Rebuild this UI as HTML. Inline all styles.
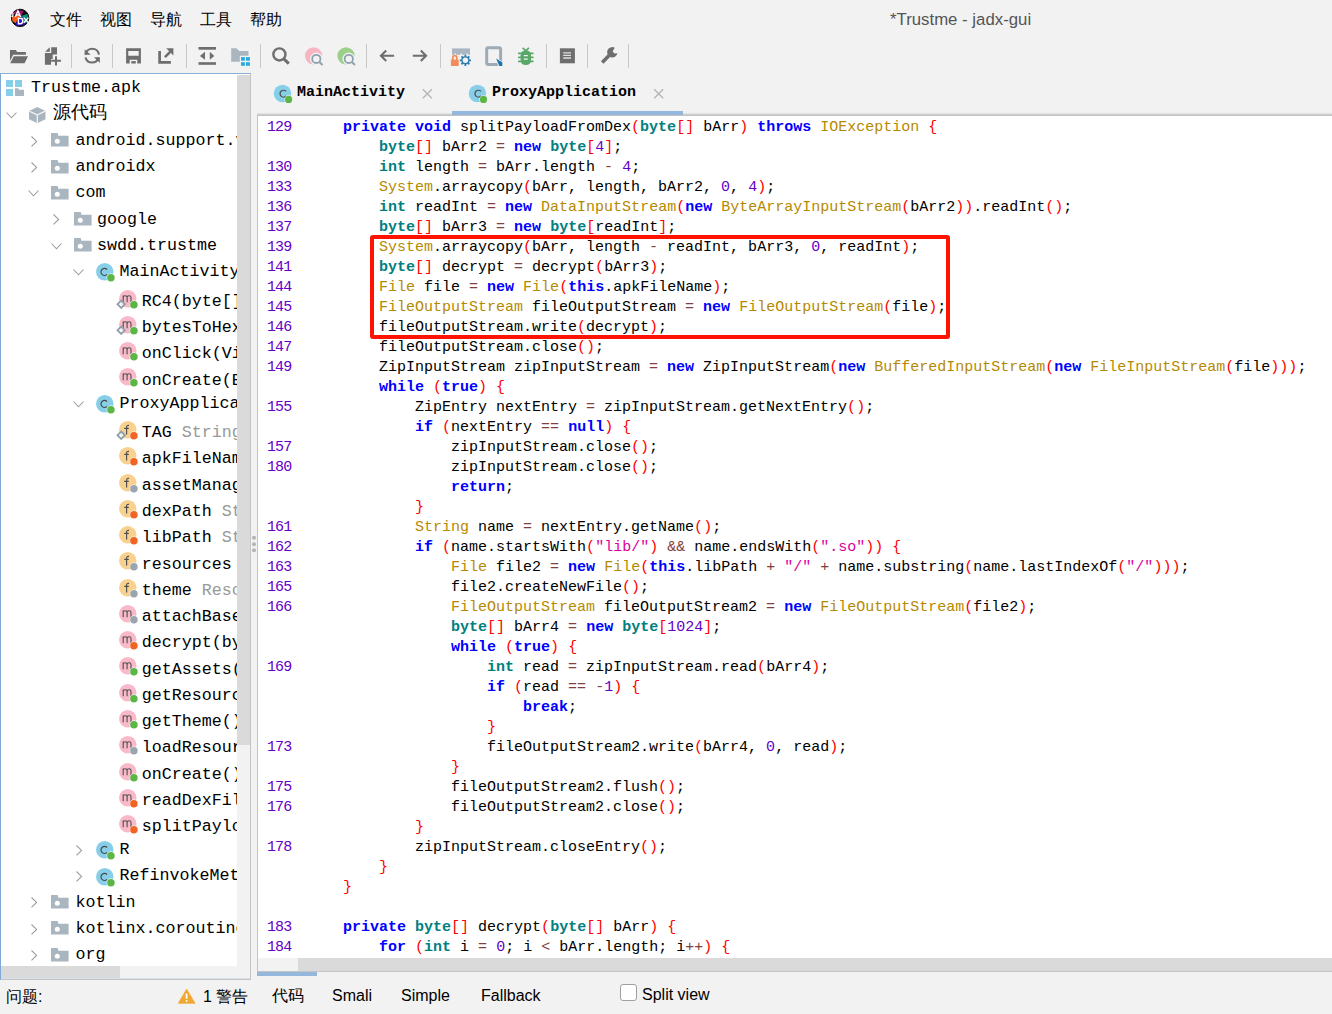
<!DOCTYPE html>
<html><head><meta charset="utf-8">
<style>
*{margin:0;padding:0;box-sizing:border-box}
html,body{width:1332px;height:1014px;overflow:hidden;background:#f2f2f2;font-family:"Liberation Sans",sans-serif;position:relative}
.abs{position:absolute}
.menu{position:absolute;top:10px;font-size:16px;line-height:20px;color:#000;white-space:nowrap}
.title{position:absolute;left:890px;top:10px;font-size:16.8px;line-height:20px;color:#555;white-space:nowrap}
.sep{position:absolute;top:44px;width:1px;height:24px;background:#c8c8c8}
/* tree */
#tree{position:absolute;left:0;top:73px;width:251px;height:907px;background:#fff;border-left:1px solid #80a8d6;border-top:1px solid #8aaed8;border-right:1px solid #c4c4c4;border-bottom:1px solid #c4c4c4;overflow:hidden}
.row{position:absolute;height:26px;left:0;white-space:nowrap;font-family:"Liberation Mono",monospace;font-size:16.67px;line-height:26px;color:#000}
.row .t{position:absolute;top:0}
.gr{color:#999}
#vs{position:absolute;left:236px;top:1px;width:13px;height:891px;background:#f2f2f2}
#vsth{position:absolute;left:236px;top:1px;width:13px;height:670px;background:#dadada}
#hs{position:absolute;left:0;top:892px;width:249px;height:12px;background:#f2f2f2}
#hsth{position:absolute;left:0;top:892px;width:119px;height:12px;background:#dadada}
#hsb{position:absolute;left:0;top:904px;width:249px;height:1px;background:#d6e1ec}
/* code */
#code{position:absolute;left:257px;top:116px;width:1080px;height:856px;background:#fff;border-left:1px solid #c4c4c4;overflow:hidden}
.ln{position:absolute;left:9px;letter-spacing:-0.9px;font-family:"Liberation Mono",monospace;font-size:15px;line-height:20px;color:#6400c8;white-space:pre}
.cl{position:absolute;left:49px;font-family:"Liberation Mono",monospace;font-size:15px;line-height:20px;color:#000;white-space:pre}
i,b{font-style:normal}
.k{color:#0000ff;font-weight:bold}
.d{color:#008080;font-weight:bold}
.c{color:#b58900}
.p{color:#ff0000}
.o{color:#804040}
.n{color:#6400c8}
.s{color:#dc009c}
.tab{position:absolute;top:83px;font-family:"Liberation Mono",monospace;font-weight:bold;font-size:15px;line-height:20px;color:#000;white-space:nowrap}
.status{position:absolute;top:985px;font-size:16px;line-height:20px;color:#000;white-space:nowrap}
</style></head><body>
<!-- menu bar -->
<div class="menu" style="left:50px">文件</div>
<div class="menu" style="left:100px">视图</div>
<div class="menu" style="left:150px">导航</div>
<div class="menu" style="left:200px">工具</div>
<div class="menu" style="left:250px">帮助</div>
<div class="title">*Trustme - jadx-gui</div>

<svg class="abs" style="left:0;top:0" width="640" height="72" viewBox="0 0 640 72">
<!-- logo -->
<defs><clipPath id="lc"><circle cx="20" cy="17.9" r="8.6"/></clipPath></defs>
<g clip-path="url(#lc)">
<rect x="10" y="8" width="20" height="20" fill="#0c0c0c"/>
<path d="M12 10.5L23.5 10.8L21.3 16L15.5 15.3Z" fill="#a8157a"/>
<path d="M10.5 16.5L20.5 15.4L15.6 23.2L10.8 20Z" fill="#f25c1e"/>
<path d="M21 16L29.5 13.2V21.8L24.6 23.5L22 18.5Z" fill="#0b8a78"/>
<path d="M17.5 19.5L22.5 17.2L25.3 24.6L15 26.6Z" fill="#3610c6"/>
</g>
<circle cx="20.1" cy="17.9" r="8.7" fill="none" stroke="#0c0c0c" stroke-width="1"/>
<path d="M12.9 12.4V15.2Q12.9 16.6 11.4 16.4" fill="none" stroke="#fff" stroke-width="1.3"/>
<path d="M15.3 17L17.9 10.8L20.6 17M16.3 15H19.6" fill="none" stroke="#fff" stroke-width="1.4"/>
<path d="M18.4 18.3H20.3Q22.8 18.3 22.8 21Q22.8 23.7 20.3 23.7H18.4Z" fill="none" stroke="#fff" stroke-width="1.4"/>
<path d="M23.8 17.6L28.4 22.8M28.4 17.6L23.8 22.8" fill="none" stroke="#fff" stroke-width="1.4"/>
<!-- open folder -->
<path d="M9.95 49.9H15.8L17.2 52.1H25.9V54.8H13.2L9.95 61Z" fill="#6e6e6e"/>
<path d="M13.8 56.2H28L24.6 63.2H10.2Z" fill="#6e6e6e"/>
<!-- file plus -->
<path d="M45.1 51.7L49.8 47.2V51.7Z" fill="#6e6e6e"/>
<path d="M51.2 47.2H57V54.6H52.7V59H51V64.7H44.9V53H51.2Z" fill="#6e6e6e"/>
<path d="M51.2 60.8H60.9M56 56.2V65.6" stroke="#6e6e6e" stroke-width="2"/>
<!-- refresh -->
<path d="M85.6 54.6A6.7 6.7 0 0 1 98.9 54.6" fill="none" stroke="#6e6e6e" stroke-width="2.1"/>
<path d="M84.7 49.2V54.8H90.6Z" fill="#6e6e6e"/>
<path d="M85.5 57.4A6.7 6.7 0 0 0 98.5 57.4" fill="none" stroke="#6e6e6e" stroke-width="2.1"/>
<path d="M99.8 57.3V62.9L94 57.3Z" fill="#6e6e6e"/>
<!-- save -->
<path d="M126.1 48.3H140.9V63.6H137.3V59.8H129.7V63.6H126.1Z M128.3 51V55.7H138.7V51Z" fill="#6e6e6e" fill-rule="evenodd"/>
<rect x="131.3" y="61.1" width="4.5" height="2.4" fill="#6e6e6e"/>
<!-- export -->
<path d="M159.6 51V62.3H170.9" fill="none" stroke="#6e6e6e" stroke-width="2.7"/>
<path d="M166.2 48.3H173.4V55.5Z" fill="#6e6e6e"/>
<path d="M164.9 57.2L170.2 51.9" stroke="#6e6e6e" stroke-width="2.6"/>
<!-- deobf -->
<rect x="198.5" y="47" width="17.5" height="2.7" fill="#6e6e6e"/>
<rect x="198.5" y="62.2" width="17.5" height="2.6" fill="#6e6e6e"/>
<path d="M199.9 55.9L205 51.8V59.8Z M209.8 51.8L214.3 55.9L209.8 59.8Z" fill="#6e6e6e"/>
<!-- folder grid -->
<path d="M231.2 48.2H236.4L239.3 51.1H248.5V55.7H239.8V61.7H231.2Z" fill="#a9b5bf"/>
<g fill="#2aa9e0"><rect x="241" y="57.1" width="3.9" height="3.6"/><rect x="246" y="57.1" width="3.9" height="3.6"/><rect x="241" y="62.2" width="3.9" height="3.6"/><rect x="246" y="62.2" width="3.9" height="3.6"/></g>
<!-- search -->
<circle cx="279.4" cy="54.4" r="6.05" fill="none" stroke="#6e6e6e" stroke-width="2.4"/>
<path d="M283.6 58.7L288.8 63.6" stroke="#6e6e6e" stroke-width="3"/>
<!-- pink search -->
<circle cx="313.6" cy="55.8" r="8.6" fill="#f7b5c4"/>
<circle cx="316.3" cy="58.9" r="6.3" fill="#f2f2f2"/>
<path d="M319.3 62L322.6 65" stroke="#f2f2f2" stroke-width="4"/>
<circle cx="316.3" cy="58.9" r="4.1" fill="none" stroke="#8fa2af" stroke-width="1.8"/>
<path d="M319.3 62L322.6 65" stroke="#8fa2af" stroke-width="2"/>
<!-- green search -->
<circle cx="346" cy="55.8" r="8.6" fill="#9ccf88"/>
<circle cx="348.8" cy="58.9" r="6.3" fill="#f2f2f2"/>
<path d="M351.8 62L355 65" stroke="#f2f2f2" stroke-width="4"/>
<circle cx="348.8" cy="58.9" r="4.1" fill="none" stroke="#8fa2af" stroke-width="1.8"/>
<path d="M351.8 62L355 65" stroke="#8fa2af" stroke-width="2"/>
<!-- back/forward -->
<path d="M381.2 55.7H394.1M386.2 50.4L380.9 55.7L386.2 61" fill="none" stroke="#6e6e6e" stroke-width="2.1"/>
<path d="M412.8 55.7H426M420.8 50.4L426.1 55.7L420.8 61" fill="none" stroke="#6e6e6e" stroke-width="2.1"/>
<!-- lock gear -->
<path d="M452 48.4H470V52.2H452Z" fill="#a9b5bf"/>
<path d="M452 52H470V54.7H468V53.5H466.5V54.7H462V53.5H460.5V54.7H456V53.5H454.5V54.7H452Z" fill="#a9b5bf"/>
<path d="M452.8 60V57.6A2 2 0 0 1 456.8 57.6V60" fill="none" stroke="#f28c5a" stroke-width="1.8"/>
<rect x="450.9" y="59.6" width="7.8" height="6.4" fill="#f28c5a"/>
<g transform="translate(465.4 60.3)" fill="#2e7fae">
<circle r="4.1"/>
<path d="M-0.9 -5.6H0.9V5.6H-0.9Z M-5.6 -0.9V0.9H5.6V-0.9Z"/>
<path d="M-0.9 -5.6H0.9V5.6H-0.9Z M-5.6 -0.9V0.9H5.6V-0.9Z" transform="rotate(45)"/>
</g>
<circle cx="465.4" cy="60.3" r="2.7" fill="#f2f2f2"/>
<!-- square pointer -->
<rect x="486.7" y="47.7" width="13.9" height="16.8" rx="1.5" fill="none" stroke="#9eabb6" stroke-width="3"/>
<path d="M495.2 57.2L503.5 62V67H498.6Z" fill="#f2f2f2"/>
<path d="M496.1 58.4L502.3 62.3V66.1H499.3Z" fill="#2176a8"/>
<!-- bug -->
<g fill="#59a869" stroke="#59a869">
<path d="M520.6 55.5Q520.6 50.6 525.8 50.6Q531 50.6 531 55.5V59.5Q531 65 525.8 65Q520.6 65 520.6 59.5Z" stroke="none"/>
<path d="M518.8 53.4H532.8M518.8 57.4H532.8M518.8 61.4H532.8" stroke-width="1.8" stroke-linecap="round" fill="none"/>
<path d="M522.6 47.8L525.8 50.6L529 47.8" stroke-width="1.6" fill="none"/>
</g>
<path d="M523.8 55.6H527.8M523.8 59.2H527.8" stroke="#f2f2f2" stroke-width="1.3"/>
<!-- list -->
<rect x="559.9" y="48.3" width="15" height="15" fill="#6e6e6e"/>
<path d="M563.2 52.8H571M563.2 55.4H571M563.2 58H571" stroke="#e0e0e0" stroke-width="1.3"/>
<!-- wrench -->
<path d="M602.2 62.4L609.8 54.8" stroke="#6e6e6e" stroke-width="3.6"/>
<path d="M614.8 47.8A5.2 5.2 0 1 0 617.4 53.2L614.5 53.5L612.6 51.3Z" fill="#6e6e6e"/>
</svg>

<!-- toolbar separators -->
<div class="sep" style="left:71px"></div>
<div class="sep" style="left:112px"></div>
<div class="sep" style="left:186px"></div>
<div class="sep" style="left:260px"></div>
<div class="sep" style="left:366px"></div>
<div class="sep" style="left:440px"></div>
<div class="sep" style="left:546px"></div>
<div class="sep" style="left:587px"></div>
<div class="sep" style="left:628px"></div>

<!-- tree -->
<div id="tree">
<div class="row" style="top:1.30px;width:236px"><div class="abs" style="left:-1.00px;top:5.60px"><svg width="20" height="18" style="position:absolute;left:6px;top:-1px"><rect x="0" y="0" width="7" height="7" fill="#87cfe9"/><rect x="9" y="0" width="7" height="7" fill="#87cfe9"/><rect x="0" y="9" width="7" height="7" fill="#87cfe9"/><path d="M9 8.3H12.3L13 9.8H18V16H9Z" fill="#a9b5bf"/></svg></div><div class="t" style="left:30.00px;top:0.00px">Trustme.apk</div></div>
<div class="row" style="top:27.57px;width:236px"><div class="abs" style="left:4.70px;top:10.00px"><svg width="12" height="8" style="position:absolute;left:0;top:0"><path d="M0.5 0.5L5.5 5.8L10.5 0.5" fill="none" stroke="#9a9a9a" stroke-width="1.05"/></svg></div><div class="abs" style="left:27.90px;top:5.10px"><svg width="18" height="18" style="position:absolute;left:0;top:0"><path d="M8.25 0L16.5 4V12.2L8.25 16.2L0 12.2V4Z" fill="#a9b5bf"/><path d="M0.5 4.2L8.25 8L16 4.2M8.25 8V16.2" fill="none" stroke="#fff" stroke-width="1.1"/></svg></div><div class="t" style="left:52.00px;top:0.00px"><span style="font-size:18px;font-weight:300;position:relative;top:-1.5px">源代码</span></div></div>
<div class="row" style="top:53.84px;width:236px"><div class="abs" style="left:29.80px;top:7.70px"><svg width="8" height="12" style="position:absolute;left:0;top:0"><path d="M0.5 0.5L5.6 5.4L0.5 10.3" fill="none" stroke="#9a9a9a" stroke-width="1.05"/></svg></div><div class="abs" style="left:50.00px;top:5.46px"><svg width="18" height="14" style="position:absolute;left:0;top:0"><path d="M0 0H6.7L7.4 2.7H17.6V13.5H0Z" fill="#a9b5bf"/><circle cx="6.3" cy="8.3" r="2.5" fill="#fff"/></svg></div><div class="t" style="left:74.50px;top:0.00px">android.support.v</div></div>
<div class="row" style="top:80.11px;width:236px"><div class="abs" style="left:29.80px;top:7.70px"><svg width="8" height="12" style="position:absolute;left:0;top:0"><path d="M0.5 0.5L5.6 5.4L0.5 10.3" fill="none" stroke="#9a9a9a" stroke-width="1.05"/></svg></div><div class="abs" style="left:50.00px;top:5.46px"><svg width="18" height="14" style="position:absolute;left:0;top:0"><path d="M0 0H6.7L7.4 2.7H17.6V13.5H0Z" fill="#a9b5bf"/><circle cx="6.3" cy="8.3" r="2.5" fill="#fff"/></svg></div><div class="t" style="left:74.50px;top:0.00px">androidx</div></div>
<div class="row" style="top:106.38px;width:236px"><div class="abs" style="left:27.20px;top:10.00px"><svg width="12" height="8" style="position:absolute;left:0;top:0"><path d="M0.5 0.5L5.5 5.8L10.5 0.5" fill="none" stroke="#9a9a9a" stroke-width="1.05"/></svg></div><div class="abs" style="left:50.00px;top:5.46px"><svg width="18" height="14" style="position:absolute;left:0;top:0"><path d="M0 0H6.7L7.4 2.7H17.6V13.5H0Z" fill="#a9b5bf"/><circle cx="6.3" cy="8.3" r="2.5" fill="#fff"/></svg></div><div class="t" style="left:74.50px;top:0.00px">com</div></div>
<div class="row" style="top:132.65px;width:236px"><div class="abs" style="left:52.30px;top:7.70px"><svg width="8" height="12" style="position:absolute;left:0;top:0"><path d="M0.5 0.5L5.6 5.4L0.5 10.3" fill="none" stroke="#9a9a9a" stroke-width="1.05"/></svg></div><div class="abs" style="left:72.50px;top:5.46px"><svg width="18" height="14" style="position:absolute;left:0;top:0"><path d="M0 0H6.7L7.4 2.7H17.6V13.5H0Z" fill="#a9b5bf"/><circle cx="6.3" cy="8.3" r="2.5" fill="#fff"/></svg></div><div class="t" style="left:96.00px;top:0.00px">google</div></div>
<div class="row" style="top:158.92px;width:236px"><div class="abs" style="left:49.70px;top:10.00px"><svg width="12" height="8" style="position:absolute;left:0;top:0"><path d="M0.5 0.5L5.5 5.8L10.5 0.5" fill="none" stroke="#9a9a9a" stroke-width="1.05"/></svg></div><div class="abs" style="left:72.50px;top:5.46px"><svg width="18" height="14" style="position:absolute;left:0;top:0"><path d="M0 0H6.7L7.4 2.7H17.6V13.5H0Z" fill="#a9b5bf"/><circle cx="6.3" cy="8.3" r="2.5" fill="#fff"/></svg></div><div class="t" style="left:96.00px;top:0.00px">swdd.trustme</div></div>
<div class="row" style="top:185.19px;width:236px"><div class="abs" style="left:72.20px;top:10.00px"><svg width="12" height="8" style="position:absolute;left:0;top:0"><path d="M0.5 0.5L5.5 5.8L10.5 0.5" fill="none" stroke="#9a9a9a" stroke-width="1.05"/></svg></div><div class="abs" style="left:95.00px;top:4.20px"><svg width="22" height="20" style="position:absolute;left:-1px;top:0;overflow:visible"><circle cx="9.75" cy="8.75" r="8.75" fill="#87cfe9"/><path d="M12.1 6.5A3.6 3.4 0 1 0 12.1 11.3" fill="none" stroke="#4a4a4a" stroke-width="1.15"/><circle cx="15.9" cy="14.8" r="4.3" fill="#fff"/><circle cx="15.9" cy="14.8" r="3.75" fill="#5cb645"/></svg></div><div class="t" style="left:118.50px;top:0.00px">MainActivity</div></div>
<div class="row" style="top:211.46px;width:236px"><div class="abs" style="left:117.50px;top:4.20px"><svg width="22" height="20" style="position:absolute;left:-1px;top:0;overflow:visible"><circle cx="9.75" cy="8.75" r="8.75" fill="#f9b9c9"/><path d="M5.2 12.2V5.6M5.2 7.6Q5.2 5.8 7 5.8Q9.1 5.8 9.1 7.6V12.2M9.1 7.6Q9.1 5.8 11 5.8Q13 5.8 13 7.6V12.2" fill="none" stroke="#4f4f4f" stroke-width="1.1"/><path d="M3.2 10.5L6.9 14.2L3.2 17.9L-0.5 14.2Z" fill="#fff" fill-opacity="0.6" stroke="#8fa0ac" stroke-width="1.8"/><circle cx="15.9" cy="14.8" r="4.3" fill="#fff"/><circle cx="15.9" cy="14.8" r="3.75" fill="#5cb645"/></svg></div><div class="t" style="left:140.70px;top:3.40px">RC4(byte[]</div></div>
<div class="row" style="top:237.73px;width:236px"><div class="abs" style="left:117.50px;top:4.20px"><svg width="22" height="20" style="position:absolute;left:-1px;top:0;overflow:visible"><circle cx="9.75" cy="8.75" r="8.75" fill="#f9b9c9"/><path d="M5.2 12.2V5.6M5.2 7.6Q5.2 5.8 7 5.8Q9.1 5.8 9.1 7.6V12.2M9.1 7.6Q9.1 5.8 11 5.8Q13 5.8 13 7.6V12.2" fill="none" stroke="#4f4f4f" stroke-width="1.1"/><path d="M3.2 10.5L6.9 14.2L3.2 17.9L-0.5 14.2Z" fill="#fff" fill-opacity="0.6" stroke="#8fa0ac" stroke-width="1.8"/><circle cx="15.9" cy="14.8" r="4.3" fill="#fff"/><circle cx="15.9" cy="14.8" r="3.75" fill="#5cb645"/></svg></div><div class="t" style="left:140.70px;top:3.40px">bytesToHex</div></div>
<div class="row" style="top:264.00px;width:236px"><div class="abs" style="left:117.50px;top:4.20px"><svg width="22" height="20" style="position:absolute;left:-1px;top:0;overflow:visible"><circle cx="9.75" cy="8.75" r="8.75" fill="#f9b9c9"/><path d="M5.2 12.2V5.6M5.2 7.6Q5.2 5.8 7 5.8Q9.1 5.8 9.1 7.6V12.2M9.1 7.6Q9.1 5.8 11 5.8Q13 5.8 13 7.6V12.2" fill="none" stroke="#4f4f4f" stroke-width="1.1"/><circle cx="15.9" cy="14.8" r="4.3" fill="#fff"/><circle cx="15.9" cy="14.8" r="3.75" fill="#5cb645"/></svg></div><div class="t" style="left:140.70px;top:3.40px">onClick(Vi</div></div>
<div class="row" style="top:290.27px;width:236px"><div class="abs" style="left:117.50px;top:4.20px"><svg width="22" height="20" style="position:absolute;left:-1px;top:0;overflow:visible"><circle cx="9.75" cy="8.75" r="8.75" fill="#f9b9c9"/><path d="M5.2 12.2V5.6M5.2 7.6Q5.2 5.8 7 5.8Q9.1 5.8 9.1 7.6V12.2M9.1 7.6Q9.1 5.8 11 5.8Q13 5.8 13 7.6V12.2" fill="none" stroke="#4f4f4f" stroke-width="1.1"/><circle cx="15.9" cy="14.8" r="4.3" fill="#fff"/><circle cx="15.9" cy="14.8" r="3.75" fill="#5cb645"/></svg></div><div class="t" style="left:140.70px;top:3.40px">onCreate(B</div></div>
<div class="row" style="top:316.54px;width:236px"><div class="abs" style="left:72.20px;top:10.00px"><svg width="12" height="8" style="position:absolute;left:0;top:0"><path d="M0.5 0.5L5.5 5.8L10.5 0.5" fill="none" stroke="#9a9a9a" stroke-width="1.05"/></svg></div><div class="abs" style="left:95.00px;top:4.20px"><svg width="22" height="20" style="position:absolute;left:-1px;top:0;overflow:visible"><circle cx="9.75" cy="8.75" r="8.75" fill="#87cfe9"/><path d="M12.1 6.5A3.6 3.4 0 1 0 12.1 11.3" fill="none" stroke="#4a4a4a" stroke-width="1.15"/><circle cx="15.9" cy="14.8" r="4.3" fill="#fff"/><circle cx="15.9" cy="14.8" r="3.75" fill="#5cb645"/></svg></div><div class="t" style="left:118.50px;top:0.00px">ProxyApplica</div></div>
<div class="row" style="top:342.81px;width:236px"><div class="abs" style="left:117.50px;top:4.20px"><svg width="22" height="20" style="position:absolute;left:-1px;top:0;overflow:visible"><circle cx="9.75" cy="8.75" r="8.75" fill="#f8d18f"/><path d="M11 4.4Q8.6 3.9 8.6 6.2V13.6M6.2 7.3H10.8" fill="none" stroke="#4f4f4f" stroke-width="1.15"/><path d="M3.2 10.5L6.9 14.2L3.2 17.9L-0.5 14.2Z" fill="#fff" fill-opacity="0.6" stroke="#8fa0ac" stroke-width="1.8"/><circle cx="15.9" cy="14.8" r="4.3" fill="#fff"/><circle cx="15.9" cy="14.8" r="3.75" fill="#f06424"/></svg></div><div class="t" style="left:140.70px;top:3.40px">TAG <span class="gr">String</span></div></div>
<div class="row" style="top:369.08px;width:236px"><div class="abs" style="left:117.50px;top:4.20px"><svg width="22" height="20" style="position:absolute;left:-1px;top:0;overflow:visible"><circle cx="9.75" cy="8.75" r="8.75" fill="#f8d18f"/><path d="M11 4.4Q8.6 3.9 8.6 6.2V13.6M6.2 7.3H10.8" fill="none" stroke="#4f4f4f" stroke-width="1.15"/><circle cx="15.9" cy="14.8" r="4.3" fill="#fff"/><circle cx="15.9" cy="14.8" r="3.75" fill="#f06424"/></svg></div><div class="t" style="left:140.70px;top:3.40px">apkFileNam</div></div>
<div class="row" style="top:395.35px;width:236px"><div class="abs" style="left:117.50px;top:4.20px"><svg width="22" height="20" style="position:absolute;left:-1px;top:0;overflow:visible"><circle cx="9.75" cy="8.75" r="8.75" fill="#f8d18f"/><path d="M11 4.4Q8.6 3.9 8.6 6.2V13.6M6.2 7.3H10.8" fill="none" stroke="#4f4f4f" stroke-width="1.15"/><circle cx="15.9" cy="14.8" r="4.3" fill="#fff"/><circle cx="15.9" cy="14.8" r="3.75" fill="#9aa5ad"/></svg></div><div class="t" style="left:140.70px;top:3.40px">assetManag</div></div>
<div class="row" style="top:421.62px;width:236px"><div class="abs" style="left:117.50px;top:4.20px"><svg width="22" height="20" style="position:absolute;left:-1px;top:0;overflow:visible"><circle cx="9.75" cy="8.75" r="8.75" fill="#f8d18f"/><path d="M11 4.4Q8.6 3.9 8.6 6.2V13.6M6.2 7.3H10.8" fill="none" stroke="#4f4f4f" stroke-width="1.15"/><circle cx="15.9" cy="14.8" r="4.3" fill="#fff"/><circle cx="15.9" cy="14.8" r="3.75" fill="#f06424"/></svg></div><div class="t" style="left:140.70px;top:3.40px">dexPath <span class="gr">St</span></div></div>
<div class="row" style="top:447.89px;width:236px"><div class="abs" style="left:117.50px;top:4.20px"><svg width="22" height="20" style="position:absolute;left:-1px;top:0;overflow:visible"><circle cx="9.75" cy="8.75" r="8.75" fill="#f8d18f"/><path d="M11 4.4Q8.6 3.9 8.6 6.2V13.6M6.2 7.3H10.8" fill="none" stroke="#4f4f4f" stroke-width="1.15"/><circle cx="15.9" cy="14.8" r="4.3" fill="#fff"/><circle cx="15.9" cy="14.8" r="3.75" fill="#f06424"/></svg></div><div class="t" style="left:140.70px;top:3.40px">libPath <span class="gr">St</span></div></div>
<div class="row" style="top:474.16px;width:236px"><div class="abs" style="left:117.50px;top:4.20px"><svg width="22" height="20" style="position:absolute;left:-1px;top:0;overflow:visible"><circle cx="9.75" cy="8.75" r="8.75" fill="#f8d18f"/><path d="M11 4.4Q8.6 3.9 8.6 6.2V13.6M6.2 7.3H10.8" fill="none" stroke="#4f4f4f" stroke-width="1.15"/><circle cx="15.9" cy="14.8" r="4.3" fill="#fff"/><circle cx="15.9" cy="14.8" r="3.75" fill="#9aa5ad"/></svg></div><div class="t" style="left:140.70px;top:3.40px">resources </div></div>
<div class="row" style="top:500.43px;width:236px"><div class="abs" style="left:117.50px;top:4.20px"><svg width="22" height="20" style="position:absolute;left:-1px;top:0;overflow:visible"><circle cx="9.75" cy="8.75" r="8.75" fill="#f8d18f"/><path d="M11 4.4Q8.6 3.9 8.6 6.2V13.6M6.2 7.3H10.8" fill="none" stroke="#4f4f4f" stroke-width="1.15"/><circle cx="15.9" cy="14.8" r="4.3" fill="#fff"/><circle cx="15.9" cy="14.8" r="3.75" fill="#9aa5ad"/></svg></div><div class="t" style="left:140.70px;top:3.40px">theme <span class="gr">Reso</span></div></div>
<div class="row" style="top:526.70px;width:236px"><div class="abs" style="left:117.50px;top:4.20px"><svg width="22" height="20" style="position:absolute;left:-1px;top:0;overflow:visible"><circle cx="9.75" cy="8.75" r="8.75" fill="#f9b9c9"/><path d="M5.2 12.2V5.6M5.2 7.6Q5.2 5.8 7 5.8Q9.1 5.8 9.1 7.6V12.2M9.1 7.6Q9.1 5.8 11 5.8Q13 5.8 13 7.6V12.2" fill="none" stroke="#4f4f4f" stroke-width="1.1"/><circle cx="15.9" cy="14.8" r="4.3" fill="#fff"/><circle cx="15.9" cy="14.8" r="3.75" fill="#9aa5ad"/></svg></div><div class="t" style="left:140.70px;top:3.40px">attachBase</div></div>
<div class="row" style="top:552.97px;width:236px"><div class="abs" style="left:117.50px;top:4.20px"><svg width="22" height="20" style="position:absolute;left:-1px;top:0;overflow:visible"><circle cx="9.75" cy="8.75" r="8.75" fill="#f9b9c9"/><path d="M5.2 12.2V5.6M5.2 7.6Q5.2 5.8 7 5.8Q9.1 5.8 9.1 7.6V12.2M9.1 7.6Q9.1 5.8 11 5.8Q13 5.8 13 7.6V12.2" fill="none" stroke="#4f4f4f" stroke-width="1.1"/><circle cx="15.9" cy="14.8" r="4.3" fill="#fff"/><circle cx="15.9" cy="14.8" r="3.75" fill="#f06424"/></svg></div><div class="t" style="left:140.70px;top:3.40px">decrypt(by</div></div>
<div class="row" style="top:579.24px;width:236px"><div class="abs" style="left:117.50px;top:4.20px"><svg width="22" height="20" style="position:absolute;left:-1px;top:0;overflow:visible"><circle cx="9.75" cy="8.75" r="8.75" fill="#f9b9c9"/><path d="M5.2 12.2V5.6M5.2 7.6Q5.2 5.8 7 5.8Q9.1 5.8 9.1 7.6V12.2M9.1 7.6Q9.1 5.8 11 5.8Q13 5.8 13 7.6V12.2" fill="none" stroke="#4f4f4f" stroke-width="1.1"/><circle cx="15.9" cy="14.8" r="4.3" fill="#fff"/><circle cx="15.9" cy="14.8" r="3.75" fill="#5cb645"/></svg></div><div class="t" style="left:140.70px;top:3.40px">getAssets(</div></div>
<div class="row" style="top:605.51px;width:236px"><div class="abs" style="left:117.50px;top:4.20px"><svg width="22" height="20" style="position:absolute;left:-1px;top:0;overflow:visible"><circle cx="9.75" cy="8.75" r="8.75" fill="#f9b9c9"/><path d="M5.2 12.2V5.6M5.2 7.6Q5.2 5.8 7 5.8Q9.1 5.8 9.1 7.6V12.2M9.1 7.6Q9.1 5.8 11 5.8Q13 5.8 13 7.6V12.2" fill="none" stroke="#4f4f4f" stroke-width="1.1"/><circle cx="15.9" cy="14.8" r="4.3" fill="#fff"/><circle cx="15.9" cy="14.8" r="3.75" fill="#5cb645"/></svg></div><div class="t" style="left:140.70px;top:3.40px">getResourc</div></div>
<div class="row" style="top:631.78px;width:236px"><div class="abs" style="left:117.50px;top:4.20px"><svg width="22" height="20" style="position:absolute;left:-1px;top:0;overflow:visible"><circle cx="9.75" cy="8.75" r="8.75" fill="#f9b9c9"/><path d="M5.2 12.2V5.6M5.2 7.6Q5.2 5.8 7 5.8Q9.1 5.8 9.1 7.6V12.2M9.1 7.6Q9.1 5.8 11 5.8Q13 5.8 13 7.6V12.2" fill="none" stroke="#4f4f4f" stroke-width="1.1"/><circle cx="15.9" cy="14.8" r="4.3" fill="#fff"/><circle cx="15.9" cy="14.8" r="3.75" fill="#5cb645"/></svg></div><div class="t" style="left:140.70px;top:3.40px">getTheme()</div></div>
<div class="row" style="top:658.05px;width:236px"><div class="abs" style="left:117.50px;top:4.20px"><svg width="22" height="20" style="position:absolute;left:-1px;top:0;overflow:visible"><circle cx="9.75" cy="8.75" r="8.75" fill="#f9b9c9"/><path d="M5.2 12.2V5.6M5.2 7.6Q5.2 5.8 7 5.8Q9.1 5.8 9.1 7.6V12.2M9.1 7.6Q9.1 5.8 11 5.8Q13 5.8 13 7.6V12.2" fill="none" stroke="#4f4f4f" stroke-width="1.1"/><circle cx="15.9" cy="14.8" r="4.3" fill="#fff"/><circle cx="15.9" cy="14.8" r="3.75" fill="#9aa5ad"/></svg></div><div class="t" style="left:140.70px;top:3.40px">loadResour</div></div>
<div class="row" style="top:684.32px;width:236px"><div class="abs" style="left:117.50px;top:4.20px"><svg width="22" height="20" style="position:absolute;left:-1px;top:0;overflow:visible"><circle cx="9.75" cy="8.75" r="8.75" fill="#f9b9c9"/><path d="M5.2 12.2V5.6M5.2 7.6Q5.2 5.8 7 5.8Q9.1 5.8 9.1 7.6V12.2M9.1 7.6Q9.1 5.8 11 5.8Q13 5.8 13 7.6V12.2" fill="none" stroke="#4f4f4f" stroke-width="1.1"/><circle cx="15.9" cy="14.8" r="4.3" fill="#fff"/><circle cx="15.9" cy="14.8" r="3.75" fill="#5cb645"/></svg></div><div class="t" style="left:140.70px;top:3.40px">onCreate()</div></div>
<div class="row" style="top:710.59px;width:236px"><div class="abs" style="left:117.50px;top:4.20px"><svg width="22" height="20" style="position:absolute;left:-1px;top:0;overflow:visible"><circle cx="9.75" cy="8.75" r="8.75" fill="#f9b9c9"/><path d="M5.2 12.2V5.6M5.2 7.6Q5.2 5.8 7 5.8Q9.1 5.8 9.1 7.6V12.2M9.1 7.6Q9.1 5.8 11 5.8Q13 5.8 13 7.6V12.2" fill="none" stroke="#4f4f4f" stroke-width="1.1"/><circle cx="15.9" cy="14.8" r="4.3" fill="#fff"/><circle cx="15.9" cy="14.8" r="3.75" fill="#f06424"/></svg></div><div class="t" style="left:140.70px;top:3.40px">readDexFil</div></div>
<div class="row" style="top:736.86px;width:236px"><div class="abs" style="left:117.50px;top:4.20px"><svg width="22" height="20" style="position:absolute;left:-1px;top:0;overflow:visible"><circle cx="9.75" cy="8.75" r="8.75" fill="#f9b9c9"/><path d="M5.2 12.2V5.6M5.2 7.6Q5.2 5.8 7 5.8Q9.1 5.8 9.1 7.6V12.2M9.1 7.6Q9.1 5.8 11 5.8Q13 5.8 13 7.6V12.2" fill="none" stroke="#4f4f4f" stroke-width="1.1"/><circle cx="15.9" cy="14.8" r="4.3" fill="#fff"/><circle cx="15.9" cy="14.8" r="3.75" fill="#f06424"/></svg></div><div class="t" style="left:140.70px;top:3.40px">splitPaylo</div></div>
<div class="row" style="top:763.13px;width:236px"><div class="abs" style="left:74.80px;top:7.70px"><svg width="8" height="12" style="position:absolute;left:0;top:0"><path d="M0.5 0.5L5.6 5.4L0.5 10.3" fill="none" stroke="#9a9a9a" stroke-width="1.05"/></svg></div><div class="abs" style="left:95.00px;top:4.20px"><svg width="22" height="20" style="position:absolute;left:-1px;top:0;overflow:visible"><circle cx="9.75" cy="8.75" r="8.75" fill="#87cfe9"/><path d="M12.1 6.5A3.6 3.4 0 1 0 12.1 11.3" fill="none" stroke="#4a4a4a" stroke-width="1.15"/><circle cx="15.9" cy="14.8" r="4.3" fill="#fff"/><circle cx="15.9" cy="14.8" r="3.75" fill="#5cb645"/></svg></div><div class="t" style="left:118.50px;top:0.00px">R</div></div>
<div class="row" style="top:789.40px;width:236px"><div class="abs" style="left:74.80px;top:7.70px"><svg width="8" height="12" style="position:absolute;left:0;top:0"><path d="M0.5 0.5L5.6 5.4L0.5 10.3" fill="none" stroke="#9a9a9a" stroke-width="1.05"/></svg></div><div class="abs" style="left:95.00px;top:4.20px"><svg width="22" height="20" style="position:absolute;left:-1px;top:0;overflow:visible"><circle cx="9.75" cy="8.75" r="8.75" fill="#87cfe9"/><path d="M12.1 6.5A3.6 3.4 0 1 0 12.1 11.3" fill="none" stroke="#4a4a4a" stroke-width="1.15"/><circle cx="15.9" cy="14.8" r="4.3" fill="#fff"/><circle cx="15.9" cy="14.8" r="3.75" fill="#5cb645"/></svg></div><div class="t" style="left:118.50px;top:0.00px">RefinvokeMet</div></div>
<div class="row" style="top:815.67px;width:236px"><div class="abs" style="left:29.80px;top:7.70px"><svg width="8" height="12" style="position:absolute;left:0;top:0"><path d="M0.5 0.5L5.6 5.4L0.5 10.3" fill="none" stroke="#9a9a9a" stroke-width="1.05"/></svg></div><div class="abs" style="left:50.00px;top:5.46px"><svg width="18" height="14" style="position:absolute;left:0;top:0"><path d="M0 0H6.7L7.4 2.7H17.6V13.5H0Z" fill="#a9b5bf"/><circle cx="6.3" cy="8.3" r="2.5" fill="#fff"/></svg></div><div class="t" style="left:74.50px;top:0.00px">kotlin</div></div>
<div class="row" style="top:841.94px;width:236px"><div class="abs" style="left:29.80px;top:7.70px"><svg width="8" height="12" style="position:absolute;left:0;top:0"><path d="M0.5 0.5L5.6 5.4L0.5 10.3" fill="none" stroke="#9a9a9a" stroke-width="1.05"/></svg></div><div class="abs" style="left:50.00px;top:5.46px"><svg width="18" height="14" style="position:absolute;left:0;top:0"><path d="M0 0H6.7L7.4 2.7H17.6V13.5H0Z" fill="#a9b5bf"/><circle cx="6.3" cy="8.3" r="2.5" fill="#fff"/></svg></div><div class="t" style="left:74.50px;top:0.00px">kotlinx.coroutine</div></div>
<div class="row" style="top:868.21px;width:236px"><div class="abs" style="left:29.80px;top:7.70px"><svg width="8" height="12" style="position:absolute;left:0;top:0"><path d="M0.5 0.5L5.6 5.4L0.5 10.3" fill="none" stroke="#9a9a9a" stroke-width="1.05"/></svg></div><div class="abs" style="left:50.00px;top:5.46px"><svg width="18" height="14" style="position:absolute;left:0;top:0"><path d="M0 0H6.7L7.4 2.7H17.6V13.5H0Z" fill="#a9b5bf"/><circle cx="6.3" cy="8.3" r="2.5" fill="#fff"/></svg></div><div class="t" style="left:74.50px;top:0.00px">org</div></div>
<div id="vs"></div><div id="vsth"></div><div id="hs"></div><div id="hsth"></div><div id="hsb"></div>
</div>

<!-- tabs -->
<div class="tab" style="left:297px">MainActivity</div>
<div class="tab" style="left:492px">ProxyApplication</div>

<!-- code -->
<div id="code">
<div class="ln" style="top:1.84px">129</div><div class="cl" style="top:1.84px">    <b class="k">private</b> <b class="k">void</b> splitPayloadFromDex<i class="p">(</i><b class="d">byte</b><i class="p">[</i><i class="p">]</i> bArr<i class="p">)</i> <b class="k">throws</b> <i class="c">IOException</i> <i class="p">{</i></div>
<div class="ln" style="top:21.84px"></div><div class="cl" style="top:21.84px">        <b class="d">byte</b><i class="p">[</i><i class="p">]</i> bArr2 <i class="o">=</i> <b class="k">new</b> <b class="d">byte</b><i class="p">[</i><i class="n">4</i><i class="p">]</i>;</div>
<div class="ln" style="top:41.84px">130</div><div class="cl" style="top:41.84px">        <b class="d">int</b> length <i class="o">=</i> bArr.length <i class="o">-</i> <i class="n">4</i>;</div>
<div class="ln" style="top:61.84px">133</div><div class="cl" style="top:61.84px">        <i class="c">System</i>.arraycopy<i class="p">(</i>bArr, length, bArr2, <i class="n">0</i>, <i class="n">4</i><i class="p">)</i>;</div>
<div class="ln" style="top:81.84px">136</div><div class="cl" style="top:81.84px">        <b class="d">int</b> readInt <i class="o">=</i> <b class="k">new</b> <i class="c">DataInputStream</i><i class="p">(</i><b class="k">new</b> <i class="c">ByteArrayInputStream</i><i class="p">(</i>bArr2<i class="p">)</i><i class="p">)</i>.readInt<i class="p">(</i><i class="p">)</i>;</div>
<div class="ln" style="top:101.84px">137</div><div class="cl" style="top:101.84px">        <b class="d">byte</b><i class="p">[</i><i class="p">]</i> bArr3 <i class="o">=</i> <b class="k">new</b> <b class="d">byte</b><i class="p">[</i>readInt<i class="p">]</i>;</div>
<div class="ln" style="top:121.84px">139</div><div class="cl" style="top:121.84px">        <i class="c">System</i>.arraycopy<i class="p">(</i>bArr, length <i class="o">-</i> readInt, bArr3, <i class="n">0</i>, readInt<i class="p">)</i>;</div>
<div class="ln" style="top:141.84px">141</div><div class="cl" style="top:141.84px">        <b class="d">byte</b><i class="p">[</i><i class="p">]</i> decrypt <i class="o">=</i> decrypt<i class="p">(</i>bArr3<i class="p">)</i>;</div>
<div class="ln" style="top:161.84px">144</div><div class="cl" style="top:161.84px">        <i class="c">File</i> file <i class="o">=</i> <b class="k">new</b> <i class="c">File</i><i class="p">(</i><b class="k">this</b>.apkFileName<i class="p">)</i>;</div>
<div class="ln" style="top:181.84px">145</div><div class="cl" style="top:181.84px">        <i class="c">FileOutputStream</i> fileOutputStream <i class="o">=</i> <b class="k">new</b> <i class="c">FileOutputStream</i><i class="p">(</i>file<i class="p">)</i>;</div>
<div class="ln" style="top:201.84px">146</div><div class="cl" style="top:201.84px">        fileOutputStream.write<i class="p">(</i>decrypt<i class="p">)</i>;</div>
<div class="ln" style="top:221.84px">147</div><div class="cl" style="top:221.84px">        fileOutputStream.close<i class="p">(</i><i class="p">)</i>;</div>
<div class="ln" style="top:241.84px">149</div><div class="cl" style="top:241.84px">        ZipInputStream zipInputStream <i class="o">=</i> <b class="k">new</b> ZipInputStream<i class="p">(</i><b class="k">new</b> <i class="c">BufferedInputStream</i><i class="p">(</i><b class="k">new</b> <i class="c">FileInputStream</i><i class="p">(</i>file<i class="p">)</i><i class="p">)</i><i class="p">)</i>;</div>
<div class="ln" style="top:261.84px"></div><div class="cl" style="top:261.84px">        <b class="k">while</b> <i class="p">(</i><b class="k">true</b><i class="p">)</i> <i class="p">{</i></div>
<div class="ln" style="top:281.84px">155</div><div class="cl" style="top:281.84px">            ZipEntry nextEntry <i class="o">=</i> zipInputStream.getNextEntry<i class="p">(</i><i class="p">)</i>;</div>
<div class="ln" style="top:301.84px"></div><div class="cl" style="top:301.84px">            <b class="k">if</b> <i class="p">(</i>nextEntry <i class="o">==</i> <b class="k">null</b><i class="p">)</i> <i class="p">{</i></div>
<div class="ln" style="top:321.84px">157</div><div class="cl" style="top:321.84px">                zipInputStream.close<i class="p">(</i><i class="p">)</i>;</div>
<div class="ln" style="top:341.84px">180</div><div class="cl" style="top:341.84px">                zipInputStream.close<i class="p">(</i><i class="p">)</i>;</div>
<div class="ln" style="top:361.84px"></div><div class="cl" style="top:361.84px">                <b class="k">return</b>;</div>
<div class="ln" style="top:381.84px"></div><div class="cl" style="top:381.84px">            <i class="p">}</i></div>
<div class="ln" style="top:401.84px">161</div><div class="cl" style="top:401.84px">            <i class="c">String</i> name <i class="o">=</i> nextEntry.getName<i class="p">(</i><i class="p">)</i>;</div>
<div class="ln" style="top:421.84px">162</div><div class="cl" style="top:421.84px">            <b class="k">if</b> <i class="p">(</i>name.startsWith<i class="p">(</i><i class="s">"lib/"</i><i class="p">)</i> <i class="o">&amp;&amp;</i> name.endsWith<i class="p">(</i><i class="s">".so"</i><i class="p">)</i><i class="p">)</i> <i class="p">{</i></div>
<div class="ln" style="top:441.84px">163</div><div class="cl" style="top:441.84px">                <i class="c">File</i> file2 <i class="o">=</i> <b class="k">new</b> <i class="c">File</i><i class="p">(</i><b class="k">this</b>.libPath <i class="o">+</i> <i class="s">"/"</i> <i class="o">+</i> name.substring<i class="p">(</i>name.lastIndexOf<i class="p">(</i><i class="s">"/"</i><i class="p">)</i><i class="p">)</i><i class="p">)</i>;</div>
<div class="ln" style="top:461.84px">165</div><div class="cl" style="top:461.84px">                file2.createNewFile<i class="p">(</i><i class="p">)</i>;</div>
<div class="ln" style="top:481.84px">166</div><div class="cl" style="top:481.84px">                <i class="c">FileOutputStream</i> fileOutputStream2 <i class="o">=</i> <b class="k">new</b> <i class="c">FileOutputStream</i><i class="p">(</i>file2<i class="p">)</i>;</div>
<div class="ln" style="top:501.84px"></div><div class="cl" style="top:501.84px">                <b class="d">byte</b><i class="p">[</i><i class="p">]</i> bArr4 <i class="o">=</i> <b class="k">new</b> <b class="d">byte</b><i class="p">[</i><i class="n">1024</i><i class="p">]</i>;</div>
<div class="ln" style="top:521.84px"></div><div class="cl" style="top:521.84px">                <b class="k">while</b> <i class="p">(</i><b class="k">true</b><i class="p">)</i> <i class="p">{</i></div>
<div class="ln" style="top:541.84px">169</div><div class="cl" style="top:541.84px">                    <b class="d">int</b> read <i class="o">=</i> zipInputStream.read<i class="p">(</i>bArr4<i class="p">)</i>;</div>
<div class="ln" style="top:561.84px"></div><div class="cl" style="top:561.84px">                    <b class="k">if</b> <i class="p">(</i>read <i class="o">==</i> <i class="o">-</i><i class="n">1</i><i class="p">)</i> <i class="p">{</i></div>
<div class="ln" style="top:581.84px"></div><div class="cl" style="top:581.84px">                        <b class="k">break</b>;</div>
<div class="ln" style="top:601.84px"></div><div class="cl" style="top:601.84px">                    <i class="p">}</i></div>
<div class="ln" style="top:621.84px">173</div><div class="cl" style="top:621.84px">                    fileOutputStream2.write<i class="p">(</i>bArr4, <i class="n">0</i>, read<i class="p">)</i>;</div>
<div class="ln" style="top:641.84px"></div><div class="cl" style="top:641.84px">                <i class="p">}</i></div>
<div class="ln" style="top:661.84px">175</div><div class="cl" style="top:661.84px">                fileOutputStream2.flush<i class="p">(</i><i class="p">)</i>;</div>
<div class="ln" style="top:681.84px">176</div><div class="cl" style="top:681.84px">                fileOutputStream2.close<i class="p">(</i><i class="p">)</i>;</div>
<div class="ln" style="top:701.84px"></div><div class="cl" style="top:701.84px">            <i class="p">}</i></div>
<div class="ln" style="top:721.84px">178</div><div class="cl" style="top:721.84px">            zipInputStream.closeEntry<i class="p">(</i><i class="p">)</i>;</div>
<div class="ln" style="top:741.84px"></div><div class="cl" style="top:741.84px">        <i class="p">}</i></div>
<div class="ln" style="top:761.84px"></div><div class="cl" style="top:761.84px">    <i class="p">}</i></div>
<div class="ln" style="top:781.84px"></div><div class="cl" style="top:781.84px"></div>
<div class="ln" style="top:801.84px">183</div><div class="cl" style="top:801.84px">    <b class="k">private</b> <b class="d">byte</b><i class="p">[</i><i class="p">]</i> decrypt<i class="p">(</i><b class="d">byte</b><i class="p">[</i><i class="p">]</i> bArr<i class="p">)</i> <i class="p">{</i></div>
<div class="ln" style="top:821.84px">184</div><div class="cl" style="top:821.84px">        <b class="k">for</b> <i class="p">(</i><b class="d">int</b> i <i class="o">=</i> <i class="n">0</i>; i <i class="o">&lt;</i> bArr.length; i<i class="o">++</i><i class="p">)</i> <i class="p">{</i></div>
</div>


<!-- tab icons -->
<svg class="abs" style="left:0;top:0" width="700" height="120">
<circle cx="282.5" cy="93.5" r="8.7" fill="#87cfe9"/>
<path d="M288.3 91.4A3.5 3.4 0 1 0 288.3 96" fill="none" stroke="#505050" stroke-width="1.3" transform="translate(-2.2 0)"/>
<circle cx="288.6" cy="99.4" r="4.2" fill="#f2f2f2"/><circle cx="288.6" cy="99.4" r="3.6" fill="#5cb645"/>
<path d="M422.8 89.2L431.8 98.2M431.8 89.2L422.8 98.2" stroke="#b4b4b4" stroke-width="1.3"/>
<circle cx="477.4" cy="93.5" r="8.7" fill="#87cfe9"/>
<path d="M483.2 91.4A3.5 3.4 0 1 0 483.2 96" fill="none" stroke="#505050" stroke-width="1.3" transform="translate(-2.2 0)"/>
<circle cx="483.5" cy="99.4" r="4.2" fill="#f2f2f2"/><circle cx="483.5" cy="99.4" r="3.6" fill="#5cb645"/>
<path d="M654.2 89.2L663.2 98.2M663.2 89.2L654.2 98.2" stroke="#b4b4b4" stroke-width="1.3"/>
</svg>
<!-- splitter dots -->
<svg class="abs" style="left:250px;top:533px" width="8" height="22">
<circle cx="4" cy="4.8" r="2" fill="#b4b4b4"/><circle cx="4" cy="11.2" r="2" fill="#b4b4b4"/><circle cx="4" cy="17.3" r="2" fill="#b4b4b4"/>
</svg>
<!-- warning -->
<svg class="abs" style="left:178px;top:988px" width="18" height="16">
<path d="M8.6 1.2L17 15.2H0.4Z" fill="#f0a830" stroke="#f0a830" stroke-width="0.8" stroke-linejoin="round"/>
<path d="M8.6 5.5V10.8" stroke="#fff" stroke-width="1.8"/><circle cx="8.6" cy="13" r="1" fill="#fff"/>
</svg>
<!-- code bottom: scrollbar + blue bar -->
<div class="abs" style="left:258px;top:958px;width:1074px;height:13px;background:#f2f2f2"></div>
<div class="abs" style="left:298px;top:958px;width:1034px;height:13px;background:#dadada"></div>
<div class="abs" style="left:257px;top:971px;width:1075px;height:1px;background:#c4c4c4"></div>
<div class="abs" style="left:257px;top:972px;width:60px;height:4px;background:#94b8dc"></div>

<div class="abs" style="left:370px;top:235px;width:580px;height:104px;border:4px solid #ff1200;border-radius:3px"></div>
<div class="abs" style="left:257px;top:113px;width:1075px;height:1px;background:#e2e2e2"></div><div class="abs" style="left:257px;top:114px;width:1075px;height:1px;background:#d0d0d0"></div><div class="abs" style="left:257px;top:115px;width:1075px;height:1px;background:#c2c2c2"></div>
<div class="abs" style="left:452px;top:111px;width:231px;height:4px;background:#94b8dc"></div>
<!-- status -->
<div class="status" style="left:6px;top:987px">问题:</div>
<div class="status" style="left:203px;top:987px">1 警告</div>
<div class="status" style="left:272px;top:986px">代码</div>
<div class="status" style="left:332px;top:986px">Smali</div>
<div class="status" style="left:401px;top:986px">Simple</div>
<div class="status" style="left:481px;top:986px">Fallback</div>
<div class="abs" style="left:620px;top:984px;width:17px;height:17px;border:1px solid #a0a0a0;border-radius:3px;background:#fff"></div>
<div class="status" style="left:642px">Split view</div>
</body></html>
